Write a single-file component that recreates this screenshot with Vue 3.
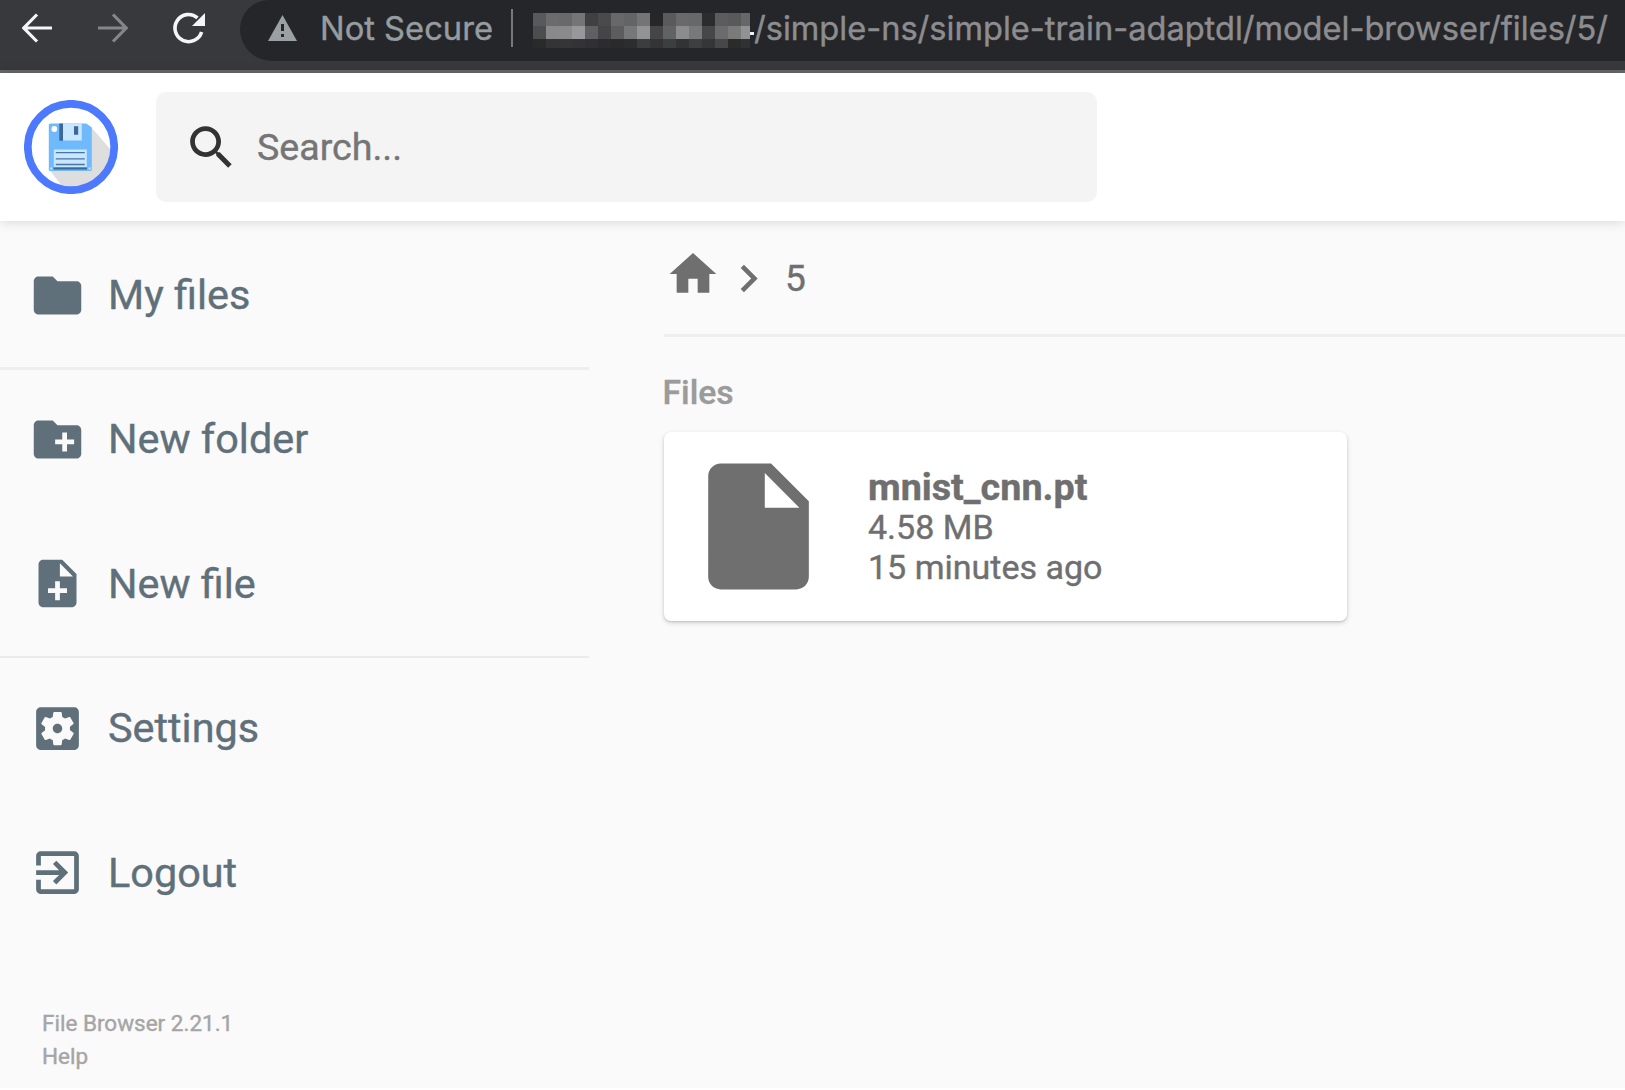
<script setup>
const mosaic = [
  ['#59595b', '#6b6b6d', '#69696b', '#757575', '#404042', '#4a4a4c', '#68686a', '#626466', '#747476', '#262628', '#5a5a5c', '#69696b', '#68686a', '#2b2c2e', '#5c5c5e', '#58595a', '#666868'],
  ['#4d4d4f', '#89898b', '#8a8a8c', '#98989a', '#606062', '#454547', '#5c5c5e', '#777779', '#929395', '#454547', '#606264', '#8c8c8e', '#78797b', '#464749', '#6b6b6d', '#7a7a78', '#909294'],
  ['#2a2a2b', '#343436', '#353537', '#333335', '#303034', '#2c2c2f', '#2a2a2b', '#2c2d2e', '#3c3d3f', '#343436', '#3d3e40', '#323335', '#3e3f41', '#353638', '#464749', '#2b2b2c', '#303132'],
]

const groups = [
  [{ label: 'My files', icon: 'M10 4H4c-1.1 0-1.99.9-1.99 2L2 18c0 1.1.9 2 2 2h16c1.1 0 2-.9 2-2V8c0-1.1-.9-2-2-2h-8l-2-2z' }],
  [
    { label: 'New folder', icon: 'M20 6h-8l-2-2H4c-1.11 0-1.99.89-1.99 2L2 18c0 1.11.89 2 2 2h16c1.11 0 2-.89 2-2V8c0-1.11-.89-2-2-2zm-1 8h-3v3h-2v-3h-3v-2h3V9h2v3h3v2z' },
    { label: 'New file', icon: 'M14 2H6c-1.1 0-1.99.9-1.99 2L4 20c0 1.1.89 2 1.99 2H18c1.1 0 2-.9 2-2V8l-6-6zm2 14h-3v3h-2v-3H8v-2h3v-3h2v3h3v2zm-3-7V3.5L18.5 9H13z' },
  ],
  [
    { label: 'Settings', icon: 'M12 10c-1.1 0-2 .9-2 2s.9 2 2 2 2-.9 2-2-.9-2-2-2zm7-7H5c-1.11 0-2 .9-2 2v14c0 1.1.89 2 2 2h14c1.11 0 2-.9 2-2V5c0-1.1-.89-2-2-2zm-1.75 9c0 .23-.02.46-.05.68l1.48 1.16c.13.11.17.3.08.45l-1.4 2.42c-.09.15-.27.21-.43.15l-1.74-.7c-.36.28-.76.51-1.18.69l-.26 1.85c-.03.17-.18.3-.35.3h-2.8c-.17 0-.32-.13-.35-.29l-.26-1.85c-.43-.18-.82-.41-1.18-.69l-1.74.7c-.16.06-.34 0-.43-.15l-1.4-2.42c-.09-.15-.05-.34.08-.45l1.48-1.16c-.03-.23-.05-.46-.05-.69 0-.23.02-.46.05-.68l-1.48-1.16c-.13-.11-.17-.3-.08-.45l1.4-2.42c.09-.15.27-.21.43-.15l1.74.7c.36-.28.76-.51 1.18-.69l.26-1.85c.03-.17.18-.3.35-.3h2.8c.17 0 .32.13.35.29l.26 1.85c.43.18.82.41 1.18.69l1.74-.7c.16-.06.34 0 .43.15l1.4 2.42c.09.15.05.34-.08.45l-1.48 1.16c.03.23.05.46.05.69z' },
    { label: 'Logout', icon: 'M10.09 15.59L11.5 17l5-5-5-5-1.41 1.41L12.67 11H3v2h9.67l-2.58 2.59zM19 3H5c-1.11 0-2 .9-2 2v4h2V5h14v14H5v-4H3v4c0 1.1.89 2 2 2h14c1.1 0 2-.9 2-2V5c0-1.1-.9-2-2-2z' },
  ],
]
</script>

<template>
  <div class="window">
    <div class="toolbar">
      <svg class="nav back" viewBox="0 0 30 30"><path d="M30 15H2M15 1.5L1.8 15L15 28.5" /></svg>
      <svg class="nav forward" viewBox="0 0 30 30"><path d="M0 15H28M15 1.5L28.2 15L15 28.5" /></svg>
      <svg class="reload" viewBox="0 0 32 30">
        <path class="arc" d="M28.6 19A13.6 13.6 0 1 1 24.500 4.800" />
        <path class="head" d="M32 0V13H19z" />
      </svg>
      <div class="omnibox">
        <svg class="warn" viewBox="0 0 29 26">
          <path d="M14.5 0L29 26H0z" />
          <path class="mark" d="M13 9h3v7h-3zM13 19h3v3h-3z" />
        </svg>
        <span class="not-secure">Not Secure</span>
        <i class="bar"></i>
        <div class="mosaic">
          <div v-for="(row, r) in mosaic" :key="r" class="mosaic-row">
            <i v-for="(c, i) in row" :key="i" :style="{ background: c }"></i>
          </div>
        </div>
        <i class="dot"></i>
        <span class="url">/simple-ns/simple-train-adaptdl/model-browser/files/5/</span>
      </div>
    </div>

    <header class="header">
      <svg class="logo" viewBox="0 0 94 94">
        <circle cx="47" cy="47" r="40" fill="#fff" />
        <path d="M67 27L87 50A40 40 0 0 1 38 86L25.500 70z" fill="#dedede" />
        <g transform="translate(-0.700 0)">
          <path d="M27 23.500H63L68.500 27.500V69.500Q68.500 71 67 71H27Q25.500 71 25.500 69.500V25Q25.500 23.500 27 23.500z" fill="#6fb9fd" />
          <path d="M39.500 23.500H58.500V40.500H39.500z" fill="#c8e6fd" />
          <path d="M36 23.500h3.700v17.300H36zM50.700 26.300h4.200v8.500h-4.200zM30.200 67.500h33.500v2H30.200z" fill="#3b6899" />
          <circle cx="31" cy="29" r="2.900" fill="#fff" />
          <path d="M30.500 49.500H63.500V67H30.500z" fill="#c8e6fd" />
          <path d="M32.500 52.700h29M32.500 58.800h29M32.500 64.500h29" stroke="#4775a5" stroke-width="1.300" />
          <path d="M27 67.500h2v2h-2zM65.300 67.500h2v2h-2z" fill="#c8e6fd" />
        </g>
        <circle cx="47" cy="47" r="43.200" fill="none" stroke="#4d79ff" stroke-width="7.700" />
      </svg>
      <div class="search">
        <svg viewBox="0 0 24 24"><path d="M15.5 14h-.79l-.28-.27C15.41 12.59 16 11.11 16 9.500 16 5.910 13.090 3 9.500 3S3 5.910 3 9.500 5.910 16 9.500 16c1.610 0 3.090-.59 4.230-1.570l.27.28v.79l5 4.990L20.490 19l-4.990-5zm-6 0C7.010 14 5 11.990 5 9.500S7.010 5 9.500 5 14 7.010 14 9.500 11.990 14 9.500 14z" /></svg>
        <span>Search...</span>
      </div>
    </header>

    <div class="body">
      <nav class="sidebar">
        <div v-for="(group, g) in groups" :key="g" class="group">
          <div v-for="item in group" :key="item.label" class="item">
            <svg viewBox="0 0 24 24"><path :d="item.icon" /></svg>
            <span>{{ item.label }}</span>
          </div>
        </div>
        <div class="credits">
          <span>File Browser 2.21.1</span>
          <span>Help</span>
        </div>
      </nav>

      <main class="main">
        <div class="crumbs">
          <svg class="home" viewBox="0 0 24 24"><path d="M10 20v-6h4v6h5v-8h3L12 3 2 12h3v8z" /></svg>
          <svg class="chevron" viewBox="0 0 24 24"><path d="M8.590 16.590L13.170 12 8.590 7.410 10 6l6 6-6 6z" /></svg>
          <span>5</span>
        </div>
        <h2>Files</h2>
        <div class="card">
          <svg viewBox="0 0 24 24"><path d="M6 2c-1.100 0-1.990.9-1.990 2L4 20c0 1.100.89 2 1.990 2H18c1.100 0 2-.9 2-2V8l-6-6H6zm7 7V3.500L18.500 9H13z" /></svg>
          <div class="info">
            <span class="name">mnist_cnn.pt</span>
            <span>4.58 MB</span>
            <span>15 minutes ago</span>
          </div>
        </div>
      </main>
    </div>
  </div>
</template>

<style>
body {
  background: #fff;
}
</style>

<style scoped>
.window {
  box-sizing: border-box;
  width: 1625px;
  height: 1090px;
  overflow: hidden;
  display: flex;
  flex-direction: column;
  font-family: Roboto, sans-serif;
  color: #6f6f6f;
}
svg {
  display: block;
  flex: none;
  fill: currentColor;
}
span,
h2 {
  white-space: nowrap;
  -webkit-text-stroke: 0.4px currentColor;
}

.toolbar {
  flex: none;
  box-sizing: border-box;
  height: 73px;
  display: flex;
  align-items: flex-start;
  background: #38393d;
  border-bottom: 3px solid #68676b;
}
.nav {
  width: 30px;
  height: 30px;
  margin-top: 13px;
  fill: none;
  stroke: #f4f5f6;
  stroke-width: 3.2;
}
.back {
  margin-left: 22px;
}
.forward {
  margin-left: 46px;
  stroke: #85868a;
}
.reload {
  width: 32px;
  height: 30px;
  margin: 13px 0 0 45px;
  overflow: visible;
}
.arc {
  fill: none;
  stroke: #f4f5f6;
  stroke-width: 3.6;
}
.head {
  fill: #f4f5f6;
}
.omnibox {
  flex: 1;
  height: 61px;
  margin-left: 35px;
  display: flex;
  align-items: flex-start;
  background: #25262a;
  border-radius: 29px 0 0 32px;
  font-family: Inter, sans-serif;
  line-height: 57px;
}
.warn {
  width: 29px;
  height: 26px;
  margin: 15px 0 0 28px;
  fill: #9aa0a3;
}
.mark {
  fill: #25262a;
}
.not-secure {
  width: 191px;
  margin-left: 23px;
  font-size: 32.7px;
  color: #969c9f;
}
.bar {
  width: 2px;
  height: 38px;
  margin-top: 9px;
  background: #77787b;
}
.mosaic {
  width: 217px;
  height: 35px;
  margin: 13px 0 0 20px;
  overflow: hidden;
}
.mosaic-row {
  display: flex;
}
.mosaic-row i {
  flex: none;
  width: 13px;
  height: 13px;
}
.dot {
  width: 4px;
  height: 3px;
  margin-top: 32px;
  background: #f2f2f2;
}
.url {
  font-size: 32.6px;
  color: #8d8d8f;
}

.header {
  flex: none;
  position: relative;
  height: 148px;
  display: flex;
  align-items: center;
  background: #fff;
  box-shadow: 0 0 12px rgba(0, 0, 0, 0.16);
}
.logo {
  width: 94px;
  height: 94px;
  margin-left: 24px;
}
.search {
  width: 941px;
  height: 110px;
  margin-left: 38px;
  display: flex;
  align-items: center;
  background: #f4f4f4;
  border-radius: 10px;
}
.search svg {
  width: 57px;
  height: 57px;
  margin-left: 27px;
  color: #333;
}
.search span {
  margin-left: 17px;
  font-size: 37.6px;
  color: #757575;
}

.body {
  flex: none;
  height: 867px;
  display: flex;
  background: #fafafa;
}
.sidebar {
  width: 589px;
  color: #5f707a;
}
.group {
  border-bottom: 2px solid #ebebeb;
}
.group:first-child {
  padding-top: 2px;
  border-bottom: 3px solid #eee;
}
.group:nth-child(2) {
  margin-top: -3px;
}
.group:nth-child(3) {
  margin-top: -2px;
  border: 0;
}
.item {
  height: 144.5px;
  display: flex;
  align-items: center;
  padding-left: 29px;
}
.group:first-child .item {
  height: 144px;
}
.item svg {
  width: 57px;
  height: 57px;
}
.item span {
  margin-left: 22px;
  font-size: 41.4px;
}
.credits {
  display: flex;
  flex-direction: column;
  padding: 62px 0 0 42px;
  font-size: 22.5px;
  line-height: 33px;
  color: #a5a5a5;
}

.main {
  flex: 1;
  margin-left: 75px;
}
.crumbs {
  height: 113px;
  box-sizing: content-box;
  display: flex;
  border-bottom: 3px solid #eee;
}
.home {
  width: 56px;
  height: 56px;
  margin: 25px 0 0 0.5px;
}
.chevron {
  width: 55px;
  height: 55px;
  margin: 30px 0 0 0.5px;
}
.crumbs span {
  margin-left: 9px;
  font-size: 37px;
  line-height: 116px;
}
h2 {
  margin: 36px 0 19px -1.5px;
  font-size: 33.7px;
  line-height: 39px;
  padding-bottom: 1px;
  font-weight: 500;
  color: #9b9b9b;
}
.card {
  width: 683px;
  height: 189px;
  display: flex;
  align-items: center;
  background: #fff;
  border-radius: 7px;
  box-shadow: 0 2px 5px rgba(0, 0, 0, 0.16), 0 1px 2px rgba(0, 0, 0, 0.12);
}
.card svg {
  width: 151px;
  height: 151px;
  margin-left: 19px;
}
.info {
  display: flex;
  flex-direction: column;
  margin-left: 34px;
  font-size: 34px;
  line-height: 40px;
}
.name {
  font-size: 37.7px;
  font-weight: 700;
}
</style>
